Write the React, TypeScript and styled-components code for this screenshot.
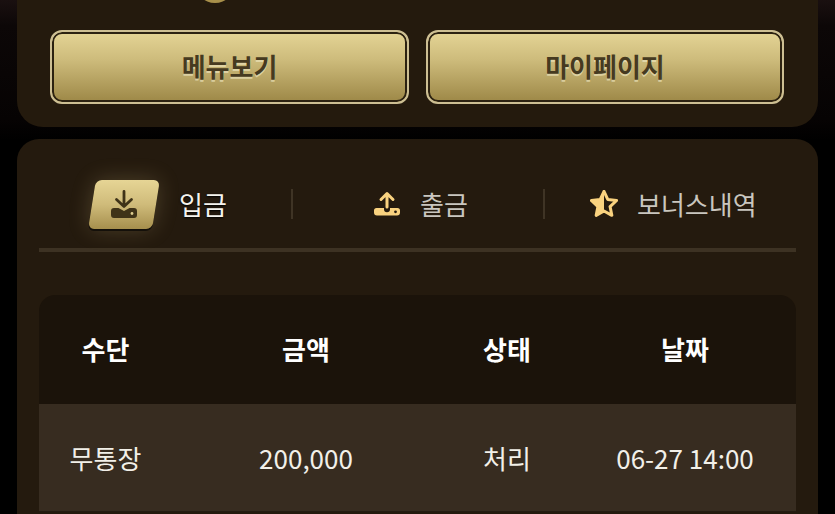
import { FC } from "react";
import styled, { createGlobalStyle } from "styled-components";

const GlobalStyle = createGlobalStyle`
  html, body {
    margin: 0;
    padding: 0;
    background: #000;
  }
  body {
    font-family: "Noto Sans CJK KR", "Noto Sans", sans-serif;
    overflow: hidden;
  }
`;

const Page = styled.div`
  position: relative;
  box-sizing: border-box;
  width: 835px;
  height: 514px;
  padding: 0 17px;
  overflow: hidden;
  display: flex;
  flex-direction: column;
  gap: 12px;
  background: linear-gradient(180deg, #1a1010 0, #0c0707 26px, #060303 120px, #000 140px);
`;

const TopPanel = styled.section`
  position: relative;
  flex: none;
  box-sizing: border-box;
  height: 127px;
  padding: 30px 33px 0;
  display: grid;
  grid-template-columns: 359px 358px;
  column-gap: 17px;
  align-items: start;
  background: #241a0d;
  border-radius: 0 0 26px 26px;
`;

const Coin = styled.span`
  position: absolute;
  left: 178px;
  top: -37px;
  width: 40px;
  height: 40px;
  border-radius: 50%;
  background: #a8904a;
`;

const GoldButton = styled.button`
  box-sizing: border-box;
  height: 74px;
  padding: 0 0 2px;
  border: 2px solid #cdbf93;
  border-radius: 12px;
  box-shadow: inset 0 0 0 2px #2c2211;
  background: linear-gradient(180deg, #e2d293 4%, #cdbb7b 40%, #a08b4a 96%);
  color: #463a20;
  font-family: inherit;
  font-size: 26px;
  font-weight: 700;
  line-height: 1;
  text-shadow: 0 2px 0 rgba(240, 232, 195, 0.65);
`;

const MainPanel = styled.section`
  flex: 1;
  min-height: 0;
  box-sizing: border-box;
  padding: 0 22px;
  background: #241a0e;
  border-radius: 22px 22px 0 0;
`;

const TabBar = styled.nav`
  box-sizing: border-box;
  height: 113px;
  padding-top: 40px;
  display: grid;
  grid-template-columns: 253px 252px 252px;
  align-items: start;
  border-bottom: 4px solid #3d3223;
`;

const Tab = styled.div<{ $divider?: boolean; $pad: number }>`
  box-sizing: border-box;
  height: 50px;
  display: flex;
  align-items: center;
  padding-left: ${(p) => p.$pad}px;
  position: relative;
  ${(p) =>
    p.$divider &&
    `
    &::after {
      content: "";
      position: absolute;
      right: -1px;
      top: 10px;
      width: 2px;
      height: 30px;
      background: #3f3425;
    }
  `}
`;

const TabLabel = styled.span<{ $active?: boolean }>`
  font-size: 26px;
  line-height: 50px;
  white-space: nowrap;
  color: ${(p) => (p.$active ? "#f6f4ee" : "#c9c6bf")};
  text-shadow: ${(p) => (p.$active ? "0 1px 2px #000" : "none")};
`;

const ActiveChip = styled.span`
  position: relative;
  flex: none;
  width: 72px;
  height: 49px;
  margin-right: 19px;
  display: flex;
  align-items: center;
  justify-content: center;
  &::before {
    content: "";
    position: absolute;
    inset: 0 4px;
    transform: skewX(-9deg);
    border-radius: 6px;
    background: linear-gradient(180deg, #e6d595 0, #cfbb7a 50%, #a68f4d 100%);
    box-shadow: 0 2px 0 #14100a, 0 0 22px rgba(226, 205, 140, 0.22);
  }
  svg {
    position: relative;
  }
`;

const TabIcon = styled.svg<{ $gap: number }>`
  flex: none;
  margin-right: ${(p) => p.$gap}px;
`;

const Table = styled.div`
  margin-top: 43px;
  border-radius: 16px 16px 0 0;
  overflow: hidden;
`;

const Row = styled.div<{ $head?: boolean }>`
  display: grid;
  grid-template-columns: 133px 268px 134px 222px;
  height: ${(p) => (p.$head ? "109px" : "108px")};
  align-items: center;
  box-sizing: border-box;
  padding-bottom: ${(p) => (p.$head ? "2px" : "0")};
  background: ${(p) => (p.$head ? "#1b130a" : "#372c20")};
  border-bottom: ${(p) => (p.$head ? "none" : "1px solid #241c12")};
  color: ${(p) => (p.$head ? "#fff" : "#f2f0e9")};
  font-size: 26px;
  font-weight: ${(p) => (p.$head ? 700 : 400)};
`;

const Cell = styled.div`
  text-align: center;
  line-height: 36px;
  white-space: nowrap;
`;

const DepositIcon: FC = () => (
  <svg width="26" height="28" viewBox="0 0 26 28">
    <path d="M13 1.5V15.5M5.5 9.5l7.5 7 7.5-7" fill="none" stroke="#3f3318" strokeWidth="2.8" strokeLinecap="round" strokeLinejoin="round" />
    <path d="M3 18h4.5l5.5 3 5.5-3H23a3 3 0 0 1 3 3v4a3 3 0 0 1-3 3H3a3 3 0 0 1-3-3v-4a3 3 0 0 1 3-3z" fill="#3f3318" />
    <circle cx="21" cy="23.5" r="1.4" fill="#e0cf90" />
  </svg>
);

const WithdrawIcon: FC = () => (
  <TabIcon $gap={19} width="28" height="28" viewBox="0 0 28 28">
    <path d="M14 3.5V17M8 9.5l6-6 6 6" fill="none" stroke="#f9d27f" strokeWidth="3" strokeLinecap="round" strokeLinejoin="round" />
    <path d="M3.5 18h7.5v1.2a3 3 0 0 0 6 0V18h7.5a2.5 2.5 0 0 1 2.5 2.5v2a3 3 0 0 1-3 3H4a3 3 0 0 1-3-3v-2A2.5 2.5 0 0 1 3.5 18z" fill="#f9d27f" />
    <circle cx="22.5" cy="21.8" r="1.4" fill="#241a0e" />
  </TabIcon>
);

const BonusIcon: FC = () => (
  <TabIcon $gap={19} width="28" height="28" viewBox="2 2 24 24">
    <path
      d="M14 3.2l3.2 6.9 7.6.9-5.6 5.2 1.5 7.5L14 20l-6.7 3.7 1.5-7.5L3.2 11l7.6-.9z"
      fill="none"
      stroke="#f9d27f"
      strokeWidth="2.6"
      strokeLinejoin="round"
    />
    <path d="M14 3.2l-3.2 6.9-7.6.9 5.6 5.2-1.5 7.5L14 20z" fill="#f9d27f" />
  </TabIcon>
);

const App: FC = () => (
  <Page>
    <GlobalStyle />
    <TopPanel>
      <Coin />
      <GoldButton>메뉴보기</GoldButton>
      <GoldButton>마이페이지</GoldButton>
    </TopPanel>
    <MainPanel>
      <TabBar>
        <Tab $divider $pad={49}>
          <ActiveChip>
            <DepositIcon />
          </ActiveChip>
          <TabLabel $active>입금</TabLabel>
        </Tab>
        <Tab $divider $pad={81}>
          <WithdrawIcon />
          <TabLabel>출금</TabLabel>
        </Tab>
        <Tab $pad={46}>
          <BonusIcon />
          <TabLabel>보너스내역</TabLabel>
        </Tab>
      </TabBar>
      <Table>
        <Row $head>
          <Cell>수단</Cell>
          <Cell>금액</Cell>
          <Cell>상태</Cell>
          <Cell>날짜</Cell>
        </Row>
        <Row>
          <Cell>무통장</Cell>
          <Cell>200,000</Cell>
          <Cell>처리</Cell>
          <Cell>06-27 14:00</Cell>
        </Row>
      </Table>
    </MainPanel>
  </Page>
);

export default App;
